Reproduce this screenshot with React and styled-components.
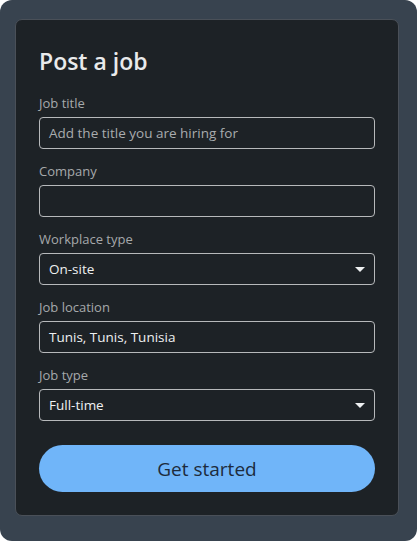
import React from 'react';
import styled, { createGlobalStyle } from 'styled-components';

const GlobalStyle = createGlobalStyle`
  html, body {
    margin: 0;
    padding: 0;
    background: #ffffff;
  }
  body {
    font-family: "Open Sans", "Noto Sans", sans-serif;
  }
`;

const Frame = styled.div`
  width: 417px;
  height: 541px;
  box-sizing: border-box;
  background: #38434f;
  border-radius: 12px;
  padding: 19px 18px 25px 15px;
`;

const Card = styled.form`
  box-sizing: border-box;
  height: 100%;
  background: #1d2226;
  border: 1px solid #4a5058;
  border-radius: 7px;
  padding: 23px;
  display: flex;
  flex-direction: column;
`;

const Title = styled.h2`
  margin: 2px 0 17px;
  font-size: 23px;
  line-height: 32px;
  font-weight: 600;
  color: #e9eaeb;
`;

const Field = styled.div`
  display: flex;
  flex-direction: column;
  gap: 5px;
  margin-bottom: 13px;
`;

const Label = styled.label`
  font-size: 13px;
  line-height: 18px;
  color: #a6a9ab;
`;

const Box = styled.div`
  box-sizing: border-box;
  height: 32px;
  border: 1px solid #b7b9bb;
  border-radius: 4px;
  display: flex;
  align-items: center;
  padding: 0 9px;
  font-size: 13.5px;
  color: ${(p) => (p.$placeholder ? '#a9acae' : '#eef0f1')};
`;

const Caret = styled.span`
  margin-left: auto;
  width: 0;
  height: 0;
  border-left: 5px solid transparent;
  border-right: 5px solid transparent;
  border-top: 5px solid #eef0f1;
`;

const Button = styled.button`
  margin-top: 11px;
  height: 48px;
  border: none;
  border-radius: 24px;
  background: #70b5f9;
  color: #1d2b3c;
  font-family: "Open Sans", "Noto Sans", sans-serif;
  font-size: 19px;
  font-weight: 500;
  cursor: pointer;
`;

const fields = [
  { label: 'Job title', value: 'Add the title you are hiring for', placeholder: true },
  { label: 'Company', value: '' },
  { label: 'Workplace type', value: 'On-site', select: true },
  { label: 'Job location', value: 'Tunis, Tunis, Tunisia' },
  { label: 'Job type', value: 'Full-time', select: true },
];

export default function App() {
  return (
    <>
      <GlobalStyle />
      <Frame>
        <Card onSubmit={(e) => e.preventDefault()}>
          <Title>Post a job</Title>
          {fields.map((f) => (
            <Field key={f.label}>
              <Label>{f.label}</Label>
              <Box $placeholder={f.placeholder}>
                {f.value}
                {f.select && <Caret />}
              </Box>
            </Field>
          ))}
          <Button type="submit">Get started</Button>
        </Card>
      </Frame>
    </>
  );
}
